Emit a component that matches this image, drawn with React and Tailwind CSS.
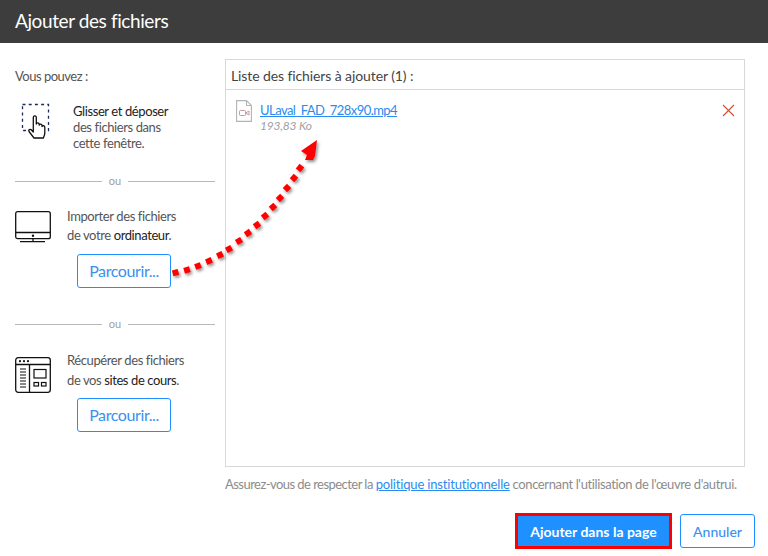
const FONT = { fontFamily: "Lato, 'Noto Sans', sans-serif" };

function DragIcon() {
  return (
    <svg width="32" height="38" viewBox="0 0 32 38" fill="none" className="shrink-0">
      <rect x="1.5" y="1.5" width="26" height="26" stroke="#1d2b5c" strokeWidth="1.3" strokeDasharray="3 3.2" />
      <path d="M13 35 L8 28.5 C7 27 9 25.6 10.2 26.8 L12.3 29 L12.3 14.5 C12.3 12.4 15.3 12.4 15.3 14.5 L15.3 21 C15.3 19.5 18.2 19.5 18.2 21.2 L18.2 22.2 C18.4 20.8 21 20.8 21 22.6 L21 23.5 C21.3 22.3 23.8 22.4 23.8 24.3 L23.8 30 C23.8 32 23 33.2 22.4 35 Z" fill="#fff" stroke="#111" strokeWidth="1.3" strokeLinejoin="round" />
    </svg>
  );
}

function MonitorIcon() {
  return (
    <svg width="36" height="32" viewBox="0 0 36 32" fill="none" className="mt-[4px] shrink-0">
      <rect x="0.7" y="0.7" width="34.6" height="27" rx="2" stroke="#111" strokeWidth="1.3" />
      <path d="M1 21.5 H35 M5 30.7 H30" stroke="#111" strokeWidth="1.3" />
      <circle cx="18" cy="24.7" r="1.2" fill="#111" />
      <path d="M18 27 V31" stroke="#111" strokeWidth="1.3" />
    </svg>
  );
}

function SiteIcon() {
  return (
    <svg width="36" height="36" viewBox="0 0 36 36" fill="none" className="mt-[7px] shrink-0">
      <rect x="0.7" y="0.7" width="34.6" height="34.6" rx="2.5" stroke="#111" strokeWidth="1.3" />
      <path d="M1 7.5 H35 M14.5 7.5 V35" stroke="#111" strokeWidth="1.3" />
      <circle cx="5" cy="4.2" r="1.1" fill="#111" /><circle cx="9" cy="4.2" r="1.1" fill="#111" /><circle cx="13" cy="4.2" r="1.1" fill="#111" />
      <path d="M5 12 H11 M5 15 H11 M5 18 H11 M5 21 H11 M5 24 H11 M5 27 H11 M5 30 H11" stroke="#111" strokeWidth="1.2" />
      <rect x="19" y="12.5" width="12" height="8.5" stroke="#111" strokeWidth="1.2" />
      <rect x="19" y="25.5" width="4.5" height="3.5" stroke="#111" strokeWidth="1.2" />
      <rect x="26.5" y="25.5" width="4.5" height="3.5" stroke="#111" strokeWidth="1.2" />
    </svg>
  );
}

function FileVideo() {
  return (
    <svg width="16" height="22" viewBox="0 0 16 22" fill="none" className="shrink-0">
      <path d="M0.6 0.6 H10.5 L15.4 5.5 V21.4 H0.6 Z M10.5 0.6 V5.5 H15.4" stroke="#b3b3b3" strokeWidth="1.1" />
      <rect x="3.5" y="10.5" width="6" height="5" rx="1" stroke="#c49a9a" strokeWidth="1" />
      <path d="M9.5 13 L13 11 V15 Z" stroke="#c49a9a" strokeWidth="1" />
    </svg>
  );
}

function Divider() {
  return (
    <div className="flex items-center gap-[6px] text-[11px] leading-[14px] tracking-normal text-[#a0a0a0]">
      <div className="h-px flex-1 bg-[#b8b8b8]" />
      <span className="px-[1px]">ou</span>
      <div className="h-px flex-1 bg-[#b8b8b8]" />
    </div>
  );
}

function Browse() {
  return (
    <button className="ml-[62px] flex h-[34px] w-[94px] items-center justify-center rounded-[3px] border border-[#1e90ff] bg-white text-[16px] tracking-[-0.4px] text-[#3c8ff0]">
      Parcourir...
    </button>
  );
}

const dots = [
  [175.5, 272.7], [187, 270], [198, 266], [209, 261], [220, 255], [229, 249], [239, 241], [248, 233],
  [257, 225], [265, 216], [273, 207], [280, 198], [287, 188], [294, 178], [300, 168],
];

function Arrow() {
  return (
    <svg className="pointer-events-none absolute left-0 top-0" width="768" height="556" viewBox="0 0 768 556" fill="none">
      <defs>
        <filter id="sh" x="-20%" y="-20%" width="150%" height="150%">
          <feDropShadow dx="1.5" dy="2" stdDeviation="1.4" floodColor="#000" floodOpacity="0.45" />
        </filter>
      </defs>
      <g filter="url(#sh)" fill="#ff0000">
        {dots.map(([x, y], i) => (
          <rect key={i} x={x - 3} y={y - 3} width="6" height="6" transform={`rotate(${-15 - i * 2.6} ${x} ${y})`} />
        ))}
        <path d="M317 140 L301 151 L307 155 L305 160 L313 160 L315 156 Z" />
      </g>
    </svg>
  );
}

export default function App() {
  return (
    <div className="relative h-[556px] w-[768px] overflow-hidden bg-white text-[#555]" style={FONT}>
      <header className="flex h-[43px] items-center bg-[#3d3d3d] pl-[15px] text-[19px] tracking-[-0.4px] text-white">
        Ajouter des fichiers
      </header>

      <div className="flex pl-[15px] pr-[23px] pt-[16px]">
        <aside className="w-[200px] shrink-0 text-[13px] leading-[16px] tracking-[-0.4px]">
          <p className="pt-[9px] leading-[16px] tracking-[-0.5px] text-[#555]">Vous pouvez :</p>

          <div className="mt-[19px] flex gap-[20px] pl-[6px]">
            <DragIcon />
            <p className="leading-[16px]">
              <span className="text-[#222]">Glisser et déposer</span>
              <br />des fichiers dans<br />cette fenêtre.
            </p>
          </div>

          <div className="mt-[23px]"><Divider /></div>

          <div className="mt-[19px] flex gap-[16px]">
            <MonitorIcon />
            <p className="leading-[19px]">
              Importer des fichiers<br />de votre <span className="text-[#222]">ordinateur</span>.
            </p>
          </div>
          <div className="mt-[9px]"><Browse /></div>

          <div className="mt-[29px]"><Divider /></div>

          <div className="mt-[19px] flex gap-[16px]">
            <SiteIcon />
            <p className="leading-[20px]">
              Récupérer des fichiers<br />de vos <span className="text-[#222]">sites de cours</span>.
            </p>
          </div>
          <div className="mt-[5px]"><Browse /></div>
        </aside>

        <main className="ml-[10px] flex-1">
          <section className="h-[408px] border border-[#d8d8d8]">
            <div className="flex h-[30px] items-center border-b border-[#d8d8d8] pl-[5px] pt-[1px] text-[14px] tracking-[-0.1px] text-[#444]">
              Liste des fichiers à ajouter (1) :
            </div>
            <div className="flex items-start pl-[10px] pr-[10px] pt-[10px]">
              <FileVideo />
              <div className="ml-[8px] flex-1 pt-[3px]">
                <a className="block text-[13px] leading-[15px] tracking-[-0.55px] text-[#2a8cf0] underline">ULaval_FAD_728x90.mp4</a>
                <p className="text-[12px] italic leading-[15px] tracking-[-0.2px] text-[#a0a0a0]">193,83 Ko</p>
              </div>
              <svg width="13" height="13" viewBox="0 0 13 13" className="mt-[4px] mr-[-1px]">
                <path d="M1 1 L12 12 M12 1 L1 12" stroke="#d9502f" strokeWidth="1.2" />
              </svg>
            </div>
          </section>
          <p className="mt-[9px] text-[13px] leading-[16px] tracking-[-0.54px] text-[#8c8c8c]">
            Assurez-vous de respecter la <a className="tracking-[-0.17px] text-[#2a8cf0] underline">politique institutionnelle</a> <span className="tracking-[-0.38px]">concernant l'utilisation de l'œuvre d'autrui.</span>
          </p>
        </main>
      </div>

      <footer className="absolute bottom-[7px] right-[13px] flex items-center gap-[8px]">
        <button className="h-[36px] w-[157px] border-[3px] border-[#ff0000] bg-[#1e90ff] text-[14px] font-bold text-white">
          Ajouter dans la page
        </button>
        <button className="h-[34px] w-[75px] rounded-[3px] border border-[#1e90ff] text-[14px] font-medium text-[#3c8ff0]">
          Annuler
        </button>
      </footer>

      <Arrow />
    </div>
  );
}
